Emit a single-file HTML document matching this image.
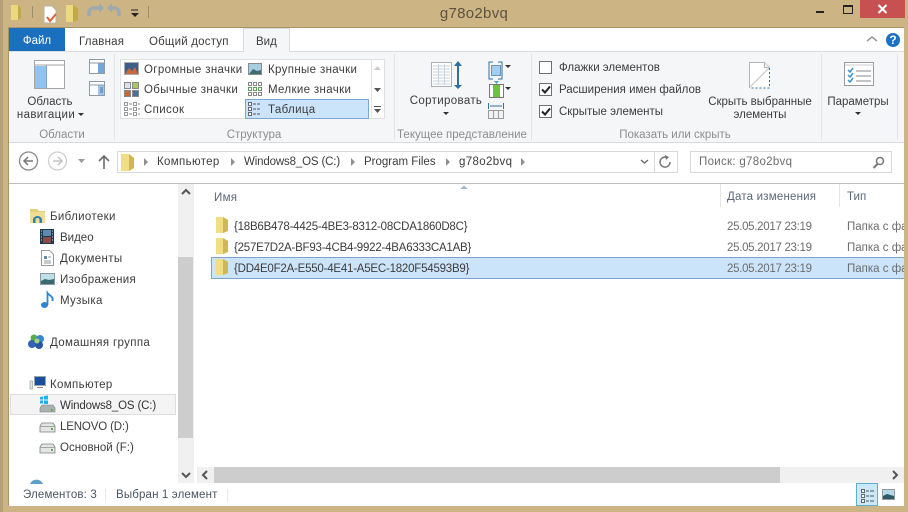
<!DOCTYPE html>
<html lang="ru"><head><meta charset="utf-8"><title>g78o2bvq</title>
<style>
html,body{margin:0;padding:0}
body{width:908px;height:512px;overflow:hidden;position:relative;background:#cdb484;font-family:"Liberation Sans",sans-serif;font-size:11.5px;color:#3c3c3c}
.a,.t{position:absolute}
.t{white-space:nowrap;line-height:14px}
svg{position:absolute;overflow:visible}
.g{color:#8d8d8d}
.c{text-align:center}
.s{letter-spacing:.35px}
.z{letter-spacing:0}
.n{letter-spacing:-.15px}
.u{letter-spacing:-.22px}
.d{letter-spacing:-.3px;color:#6d6d6d}
</style></head><body>
<!-- window -->
<div class="a" style="left:8px;top:27px;width:896px;height:479px;background:#fff;border-left:1px solid #a69468;border-top:1px solid #a69468;box-sizing:border-box"></div>
<div class="a" style="left:0;top:0;width:3px;height:512px;background:#b5a079"></div>

<!-- title bar -->
<svg style="left:0;top:0" width="170" height="27">
<path d="M11 5h7l3 3v10l-3 2h-7z" fill="#ead97f"/><path d="M18 5v15l3-2V8z" fill="#c2a848"/>
<path d="M32.500 6v12" stroke="#9c8f70"/>
<path d="M44 6h8l4 4v13H44z" fill="#fff" stroke="#b8b2a6"/><path d="M47 17l3 4 6-7" fill="none" stroke="#d9643c" stroke-width="2"/>
<path d="M66 5h7l5 3v12l-5 2h-7z" fill="#ead97f"/><path d="M73 5v17l5-2V8z" fill="#c2a848"/>
<path d="M89 16v-4a5 5 0 0 1 5-4h6" fill="none" stroke="#9ba9b0" stroke-width="3.500"/><path d="M99 3l5 5-5 5z" fill="#9ba9b0"/>
<path d="M119 16v-4a5 5 0 0 0-5-4h-3" fill="none" stroke="#9ba9b0" stroke-width="3.500"/><path d="M112 3l-5 5 5 5z" fill="#9ba9b0"/>
<path d="M131 10h7" stroke="#222"/><path d="M131 13h8l-4 4z" fill="#222"/>
<path d="M148.500 6v12" stroke="#9c8f70"/>
</svg>
<div class="t c" style="left:367px;top:4px;width:214px;font-size:15px;line-height:20px;color:#5c5240;letter-spacing:.3px">g78o2bvq</div>
<div class="a" style="left:816px;top:11px;width:8px;height:2px;background:#222"></div>
<div class="a" style="left:843px;top:5px;width:8px;height:6px;border:1px solid #222;border-top-width:2px"></div>
<div class="a" style="left:860px;top:0;width:45px;height:18px;background:#c75050"></div>
<svg style="left:877px;top:4px" width="11" height="10"><path d="M1.500 1l8 8M9.500 1l-8 8" stroke="#fff" stroke-width="2"/></svg>

<!-- tabs -->
<div class="a" style="left:9px;top:28px;width:56px;height:23px;background:#1a70be"></div>
<div class="t c" style="left:9px;top:34px;width:56px;color:#fff">Файл</div>
<div class="t" style="left:79px;top:35px;letter-spacing:.2px">Главная</div>
<div class="t" style="left:149px;top:35px;letter-spacing:.2px">Общий доступ</div>
<div class="a" style="left:243px;top:28px;width:47px;height:24px;background:#f5f6f7;border:1px solid #dadbdc;border-bottom:0;box-sizing:border-box;z-index:2"></div>
<div class="t" style="left:256px;top:35px;z-index:3">Вид</div>
<svg style="left:866px;top:32px" width="34" height="16"><path d="M1 9l5-4 5 4" fill="none" stroke="#999" stroke-width="1.500"/>
<circle cx="27" cy="8" r="7" fill="#1a70c4"/></svg>
<div class="t c" style="left:886px;top:33px;width:14px;color:#fff;font-weight:bold;font-size:12px">?</div>

<!-- ribbon -->
<div class="a" style="left:9px;top:51px;width:895px;height:92px;background:#f5f6f7;border-top:1px solid #dadbdc;border-bottom:1px solid #dadbdc;box-sizing:border-box"></div>
<div class="a" style="left:114px;top:54px;width:1px;height:86px;background:#e2e3e4"></div>
<div class="a" style="left:394px;top:54px;width:1px;height:86px;background:#e2e3e4"></div>
<div class="a" style="left:531px;top:54px;width:1px;height:86px;background:#e2e3e4"></div>
<div class="a" style="left:821px;top:54px;width:1px;height:86px;background:#e2e3e4"></div>
<div class="a" style="left:897px;top:54px;width:1px;height:86px;background:#e2e3e4"></div>

<!-- Области -->
<svg style="left:33px;top:60px" width="75" height="46">
<rect x="1.500" y=".5" width="30" height="28" fill="#fff" stroke="#a5a5a5"/><path d="M2 5h29" stroke="#a5a5a5"/>
<rect x="2" y="6" width="11" height="22" fill="#8fc3f4"/><path d="M13.500 5v23" stroke="#7fa6c8"/>
<rect x="56.500" y="-.5" width="15" height="14" fill="#fff" stroke="#8e9aa6"/><rect x="65" y="3" width="6" height="10" fill="#6fa8dc"/><path d="M57 3h14" stroke="#8e9aa6"/>
<rect x="56.500" y="21.500" width="15" height="14" fill="#fff" stroke="#8e9aa6"/><rect x="65" y="25" width="6" height="10" fill="#9fc6ea"/><path d="M57 25h14" stroke="#8e9aa6"/><path d="M67 28h3M67 30h3M67 32h3" stroke="#3a78b0"/>
</svg>
<div class="t c z" style="left:14px;top:95px;width:72px">Область</div>
<div class="t c s" style="left:10px;top:108px;width:72px">навигации</div>
<svg style="left:78px;top:113px" width="6" height="4"><path d="M0 0h6l-3 3z" fill="#333"/></svg>
<div class="t c g z" style="left:26px;top:128px;width:72px">Области</div>

<!-- Структура gallery -->
<div class="a" style="left:120px;top:59px;width:265px;height:60px;background:#fff;border:1px solid #dfe0e1;box-sizing:border-box"></div>
<div class="a" style="left:245px;top:99px;width:124px;height:20px;background:#cce4fa;border:1px solid #7ba7d2;box-sizing:border-box"></div>
<svg style="left:120px;top:59px" width="265" height="60">
<rect x="4.500" y="3.500" width="14" height="12" fill="#3c5f8a" stroke="#aaa"/><path d="M5 15l4-6 3 3 3-4 3 7z" fill="#c9683a"/>
<rect x="4.500" y="23.500" width="6" height="6" fill="#d7e4ef" stroke="#888"/><rect x="12.500" y="23.500" width="6" height="6" fill="#a8c46b" stroke="#888"/><rect x="4.500" y="31.500" width="6" height="6" fill="#c9683a" stroke="#888"/><rect x="12.500" y="31.500" width="6" height="6" fill="#4a6f9a" stroke="#888"/>
<g fill="#fff" stroke="#999"><rect x="4.500" y="43.500" width="3" height="3"/><rect x="4.500" y="48.500" width="3" height="3"/><rect x="4.500" y="53.500" width="3" height="3"/><rect x="13.500" y="43.500" width="3" height="3"/><rect x="13.500" y="48.500" width="3" height="3"/><rect x="13.500" y="53.500" width="3" height="3"/></g>
<path d="M9 45h3M9 50h3M9 55h3M18 45h2M18 50h2M18 55h2" stroke="#888"/>
<rect x="128.500" y="4.500" width="13" height="11" fill="#a9cde0" stroke="#8a8a8a"/><path d="M129 15l4-5 4 2 4-1v4z" fill="#3f6b73"/>
<g fill="#fff" stroke="#888"><rect x="128.500" y="23.500" width="3" height="3"/><rect x="133.500" y="23.500" width="3" height="3"/><rect x="138.500" y="23.500" width="3" height="3"/><rect x="128.500" y="28.500" width="3" height="3" stroke="#5a9c5a"/><rect x="133.500" y="28.500" width="3" height="3" stroke="#5a9c5a"/><rect x="138.500" y="28.500" width="3" height="3" stroke="#5a9c5a"/><rect x="128.500" y="33.500" width="3" height="3"/><rect x="133.500" y="33.500" width="3" height="3"/><rect x="138.500" y="33.500" width="3" height="3"/></g>
<g fill="#fff" stroke="#667"><rect x="128.500" y="43.500" width="3" height="3"/><rect x="128.500" y="48.500" width="3" height="3"/><rect x="128.500" y="53.500" width="3" height="3"/></g>
<path d="M133 45h3M137 45h3M133 50h3M137 50h3M133 55h3M137 55h3" stroke="#556"/>
</svg>
<div class="t s" style="left:144px;top:63px">Огромные значки</div>
<div class="t s" style="left:268px;top:63px">Крупные значки</div>
<div class="t s" style="left:144px;top:83px">Обычные значки</div>
<div class="t s" style="left:268px;top:83px">Мелкие значки</div>
<div class="t s" style="left:144px;top:103px">Список</div>
<div class="t s" style="left:268px;top:103px">Таблица</div>
<svg style="left:370px;top:60px" width="15" height="58"><path d="M1.500 0v58" stroke="#e4e5e6"/><path d="M4 10l3.500-4 3.500 4z" fill="#ccc"/><path d="M4 28h7l-3.500 4z" fill="#555"/><path d="M4 46.500h7" stroke="#555"/><path d="M4 49h7l-3.500 4z" fill="#555"/></svg>
<div class="t c g z" style="left:204px;top:128px;width:100px">Структура</div>

<!-- Текущее представление -->
<svg style="left:428px;top:60px" width="90" height="62">
<rect x="3.500" y="2.500" width="20" height="24" fill="#fff" stroke="#aab0b6"/><path d="M5 6h17M5 9h17M5 12h17M5 15h17M5 18h17M5 21h17M5 24h17" stroke="#c5d4e2"/><path d="M10.500 4v21M16.500 4v21" stroke="#c5d4e2"/>
<path d="M30 3v24" stroke="#2d6f9f" stroke-width="2"/><path d="M26 6l4-5 4 5zM26 25h8l-4 4z" fill="#2d6f9f"/>
<path d="M65 2h-4v17h4M70 2h4v17h-4" fill="none" stroke="#2d6f9f"/><rect x="63.500" y="5.500" width="9" height="10" fill="#a5cdf0" stroke="#6d93b5"/><path d="M77 5h6l-3 3z" fill="#333"/>
<rect x="61.500" y="24.500" width="14" height="13" fill="#fff" stroke="#777"/><rect x="65" y="25" width="7" height="12" fill="#6cc33c"/><path d="M66 21h5l-2.500 3z" fill="#5a9ccc"/><path d="M77 27h6l-3 3z" fill="#333"/>
<path d="M60.500 43v6M75.500 43v6M62 46h12" stroke="#2d6f9f"/><rect x="60.500" y="50.500" width="15" height="8" fill="#f1f1f1" stroke="#999"/><path d="M65.500 51v7M70.500 51v7" stroke="#999"/>
</svg>
<div class="t c s" style="left:400px;top:94px;width:92px">Сортировать</div>
<svg style="left:443px;top:112px" width="6" height="4"><path d="M0 0h6l-3 3z" fill="#333"/></svg>
<div class="t c g z" style="left:395px;top:128px;width:134px">Текущее представление</div>

<!-- Показать или скрыть -->
<div class="a" style="left:539px;top:61px;width:13px;height:13px;box-sizing:border-box;background:#fff;border:1px solid #707070"></div>
<div class="a" style="left:539px;top:83px;width:13px;height:13px;box-sizing:border-box;background:#fff;border:1px solid #707070"></div>
<div class="a" style="left:539px;top:105px;width:13px;height:13px;box-sizing:border-box;background:#fff;border:1px solid #707070"></div>
<svg style="left:539px;top:83px" width="15" height="37"><path d="M3 6.500l3 3 5-6" fill="none" stroke="#222" stroke-width="2"/><path d="M3 28.500l3 3 5-6" fill="none" stroke="#222" stroke-width="2"/></svg>
<div class="t z" style="left:559px;top:61px">Флажки элементов</div>
<div class="t z" style="left:559px;top:83px">Расширения имен файлов</div>
<div class="t z" style="left:559px;top:105px">Скрытые элементы</div>
<svg style="left:748px;top:62px" width="24" height="28"><path d="M1.500.5h15l5 5V26H1.500z" fill="#fff"/><path d="M1.500 26V.5h15l5 5" fill="none" stroke="#b5b5b5"/><path d="M16.500.5v5h5" fill="#eee" stroke="#b5b5b5"/><path d="M2 25L21 6" stroke="#c2c2c2"/><path d="M21.500 6v20H1.500" fill="none" stroke="#2d6f9f" stroke-dasharray="2 2"/></svg>
<div class="t c z" style="left:700px;top:95px;width:120px">Скрыть выбранные</div>
<div class="t c z" style="left:700px;top:108px;width:120px">элементы</div>
<div class="t c g z" style="left:600px;top:128px;width:150px">Показать или скрыть</div>
<svg style="left:844px;top:62px" width="31" height="25"><rect x=".5" y=".5" width="29" height="23" fill="#fff" stroke="#9a9a9a" /><path d="M1 3h29" stroke="#ccc"/><path d="M12 9h15M12 14h15M12 19h15" stroke="#888"/><path d="M4 8l2 2 3-4M4 13l2 2 3-4M4 18l2 2 3-4" fill="none" stroke="#3a93c9" stroke-width="1.500"/></svg>
<div class="t c z" style="left:820px;top:95px;width:76px">Параметры</div>
<svg style="left:855px;top:112px" width="6" height="4"><path d="M0 0h6l-3 3z" fill="#333"/></svg>

<!-- address bar -->
<svg style="left:18px;top:150px" width="100" height="24">
<circle cx="10.500" cy="11" r="9" fill="#fff" stroke="#8a8a8a" stroke-width="1.300"/><path d="M15 11H6M10 7l-4 4 4 4" fill="none" stroke="#777" stroke-width="1.500"/>
<circle cx="39.500" cy="11" r="9" fill="#fff" stroke="#d0d0d0" stroke-width="1.300"/><path d="M35 11h9M40 7l4 4-4 4" fill="none" stroke="#c4c4c4" stroke-width="1.500"/>
<path d="M60 9h7l-3.500 4z" fill="#999"/>
<path d="M86 19V6M81 11l5-5 5 5" fill="none" stroke="#6a6a6a" stroke-width="1.600"/>
</svg>
<div class="a" style="left:117px;top:151px;width:561px;height:22px;background:#fff;border:1px solid #d9d9d9;box-sizing:border-box"></div>
<svg style="left:120px;top:152px" width="16" height="20"><path d="M1 2h8l5 4v10l-5 3H1z" fill="#f0de86"/><path d="M9 2v17l5-3V6z" fill="#d0b654"/></svg>
<div class="t s" style="left:157px;top:155px">Компьютер</div>
<div class="t n" style="left:244px;top:155px">Windows8_OS (C:)</div>
<div class="t z" style="left:364px;top:155px">Program Files</div>
<div class="t s" style="left:459px;top:155px">g78o2bvq</div>
<svg style="left:140px;top:158px" width="390" height="9"><path d="M4 0l4 4-4 4zM91 0l4 4-4 4zM211 0l4 4-4 4zM306 0l4 4-4 4zM381 0l4 4-4 4z" fill="#8f8f8f"/></svg>
<svg style="left:638px;top:152px" width="40" height="20"><path d="M3 8l3.500 3L10 8" fill="none" stroke="#666" stroke-width="1.300"/><path d="M16.500 0v20" stroke="#d9d9d9"/>
<path d="M32 10a5 5 0 1 1-3-4.500" fill="none" stroke="#777" stroke-width="1.500"/><path d="M27 3l4 2-3 3z" fill="#777"/></svg>
<div class="a" style="left:690px;top:151px;width:202px;height:22px;background:#fff;border:1px solid #d9d9d9;box-sizing:border-box"></div>
<div class="t" style="left:699px;top:155px;color:#6d6d6d;letter-spacing:.3px">Поиск: g78o2bvq</div>
<svg style="left:872px;top:156px" width="14" height="14"><circle cx="8" cy="5" r="3.500" fill="none" stroke="#777" stroke-width="1.500"/><path d="M5.500 8L1.500 12" stroke="#777" stroke-width="2"/></svg>
<div class="a" style="left:9px;top:183px;width:895px;height:1px;background:#bfbfbf"></div>

<!-- nav pane -->
<svg style="left:29px;top:208px" width="26" height="16"><path d="M1 1h7l2 2h6v3H1z" fill="#e6cf7c"/><path d="M1 4h15v11H1z" fill="#eedc97"/><path d="M4 15v-3a4.500 4 0 0 1 9 0v3h-2.500v-3a2 2 0 0 0-4 0v3z" fill="#2f7fb5"/></svg>
<div class="t s" style="left:50px;top:210px">Библиотеки</div>
<svg style="left:40px;top:229px" width="15" height="16"><rect width="14" height="15" fill="#1d3a4d"/><rect x="3" y="1" width="8" height="6" fill="#5b8bb3"/><rect x="3" y="8" width="8" height="6" fill="#8a4a48"/><path d="M1 2h1M1 5h1M1 8h1M1 11h1M12 2h1M12 5h1M12 8h1M12 11h1" stroke="#cfd8dd"/></svg>
<div class="t z" style="left:60px;top:231px">Видео</div>
<svg style="left:41px;top:250px" width="14" height="16"><path d="M.5.500h8l4 4v11H.5z" fill="#fff" stroke="#9a9a9a"/><path d="M3 6h3v3H3z" fill="#5d8bb0"/><path d="M7 7h3M3 11h7M3 13h7" stroke="#8a99a6"/></svg>
<div class="t s" style="left:60px;top:252px">Документы</div>
<svg style="left:40px;top:273px" width="15" height="12"><rect x=".5" y=".5" width="14" height="11" fill="#bfe0ea" stroke="#8a9aa0"/><path d="M1 11V8l4-2 4 1 5-1v5z" fill="#356a6e"/></svg>
<div class="t s" style="left:60px;top:273px">Изображения</div>
<svg style="left:40px;top:291px" width="15" height="18"><ellipse cx="4.500" cy="14" rx="3.500" ry="3" fill="#2d85cf"/><path d="M7.500 14V2c2 3 6 3 5 8" fill="none" stroke="#2d85cf" stroke-width="1.800"/></svg>
<div class="t s" style="left:60px;top:294px">Музыка</div>
<svg style="left:28px;top:333px" width="18" height="17"><circle cx="6" cy="5" r="3.500" fill="#5cab4e"/><circle cx="4" cy="11" r="4" fill="#2e63b5"/><circle cx="12" cy="6" r="4" fill="#3a86d4"/><circle cx="11" cy="12" r="4" fill="#25569f"/><circle cx="9" cy="8" r="2.500" fill="#a6d67c"/></svg>
<div class="t s" style="left:50px;top:336px">Домашняя группа</div>
<svg style="left:29px;top:376px" width="18" height="15"><rect x="5.500" y=".5" width="11" height="9" fill="#1b4f9c" stroke="#9aa4ae"/><path d="M8 11h6v1H8z" fill="#888"/><rect x="1" y="5" width="2.500" height="8" fill="#dfe5e8" stroke="#8b9499" stroke-width=".6"/></svg>
<div class="t s" style="left:50px;top:378px">Компьютер</div>
<div class="a" style="left:10px;top:394px;width:166px;height:21px;background:#f4f4f4;border:1px solid #dedede;box-sizing:border-box"></div>
<svg style="left:39px;top:395px" width="17" height="18"><path d="M1 2l3-.5v3H1zM5 1l4-.5v4H5zM1 5.500h3v3H1zM5 5.500h4v3.500H5z" fill="#1ab2e8"/><path d="M1 13l2-3h11l2 3v4H1z" fill="#aab1b3" stroke="#7a8082" stroke-width=".6"/><rect x="12" y="14" width="2" height="2" fill="#5fb04a"/></svg>
<div class="t n" style="left:60px;top:399px;color:#333">Windows8_OS (C:)</div>
<svg style="left:39px;top:422px" width="17" height="11"><path d="M1 4l2-3h11l2 3v6H1z" fill="#e4e4e4" stroke="#7a8082" stroke-width=".8"/><path d="M1 4.500h15" stroke="#a5a5a5"/><rect x="12" y="6" width="2" height="2" fill="#5fb04a"/></svg>
<div class="t n" style="left:60px;top:420px">LENOVO (D:)</div>
<svg style="left:39px;top:443px" width="17" height="11"><path d="M1 4l2-3h11l2 3v6H1z" fill="#e4e4e4" stroke="#7a8082" stroke-width=".8"/><path d="M1 4.500h15" stroke="#a5a5a5"/><rect x="12" y="6" width="2" height="2" fill="#5fb04a"/></svg>
<div class="t z" style="left:60px;top:441px">Основной (F:)</div>
<svg style="left:29px;top:480px" width="16" height="4"><path d="M1 4a7 7 0 0 1 13 0z" fill="#5aa0c8"/></svg>

<!-- nav scrollbar -->
<div class="a" style="left:178px;top:184px;width:16px;height:299px;background:#f0f0f0"></div>
<div class="a" style="left:178px;top:257px;width:15px;height:181px;background:#cdcdcd"></div>
<svg style="left:178px;top:184px" width="16" height="299"><path d="M4 10l4-4 4 4" fill="none" stroke="#555" stroke-width="2"/><path d="M4 289l4 4 4-4" fill="none" stroke="#555" stroke-width="2"/></svg>

<!-- list header -->
<div class="t" style="left:214px;top:191px;color:#5a6779;letter-spacing:.3px">Имя</div>
<svg style="left:460px;top:185px" width="9" height="5"><path d="M0 4l4-3.500L8 4z" fill="#a5bdd2"/></svg>
<div class="a" style="left:720px;top:184px;width:1px;height:23px;background:#e5e5e5"></div>
<div class="a" style="left:839px;top:184px;width:1px;height:23px;background:#e5e5e5"></div>
<div class="t" style="left:727px;top:190px;color:#5a6779;letter-spacing:.2px">Дата изменения</div>
<div class="t" style="left:847px;top:190px;color:#5a6779">Тип</div>

<!-- rows -->
<div class="a" style="left:211px;top:257px;width:693px;height:22px;background:#cce4fa;border:1px solid #7da2ce;border-right:0;box-sizing:border-box"></div>
<svg style="left:215px;top:216px" width="15" height="60">
<path d="M1 1h7l5 3v11l-5 2H1z" fill="#f0de86"/><path d="M8 1v16l5-2V4z" fill="#d0b654"/>
<path d="M1 22h7l5 3v11l-5 2H1z" fill="#f0de86"/><path d="M8 22v16l5-2V25z" fill="#d0b654"/>
<path d="M1 43h7l5 3v11l-5 2H1z" fill="#f0de86"/><path d="M8 43v16l5-2V46z" fill="#d0b654"/>
</svg>
<div class="t u" style="left:234px;top:220px">{18B6B478-4425-4BE3-8312-08CDA1860D8C}</div>
<div class="t u" style="left:234px;top:241px">{257E7D2A-BF93-4CB4-9922-4BA6333CA1AB}</div>
<div class="t u" style="left:234px;top:262px">{DD4E0F2A-E550-4E41-A5EC-1820F54593B9}</div>
<div class="t d" style="left:727px;top:220px">25.05.2017 23:19</div>
<div class="t d" style="left:727px;top:241px">25.05.2017 23:19</div>
<div class="t d" style="left:727px;top:262px">25.05.2017 23:19</div>
<div class="a" style="left:847px;top:220px;width:57px;height:14px;overflow:hidden"><span class="t" style="left:0;top:0;color:#6d6d6d">Папка с файлами</span></div>
<div class="a" style="left:847px;top:241px;width:57px;height:14px;overflow:hidden"><span class="t" style="left:0;top:0;color:#6d6d6d">Папка с файлами</span></div>
<div class="a" style="left:847px;top:262px;width:57px;height:14px;overflow:hidden"><span class="t" style="left:0;top:0;color:#6d6d6d">Папка с файлами</span></div>

<!-- h scrollbar -->
<div class="a" style="left:197px;top:467px;width:707px;height:16px;background:#f0f0f0"></div>
<div class="a" style="left:214px;top:467px;width:566px;height:16px;background:#cdcdcd"></div>
<svg style="left:197px;top:467px" width="707" height="16"><path d="M10 4l-4 4 4 4" fill="none" stroke="#555" stroke-width="2"/><path d="M696 4l4 4-4 4" fill="none" stroke="#555" stroke-width="2"/></svg>

<!-- status bar -->
<div class="t" style="left:23px;top:488px;color:#4a5563;letter-spacing:.15px">Элементов: 3</div>
<div class="a" style="left:105px;top:489px;width:1px;height:13px;background:#e8e8e8"></div>
<div class="t" style="left:116px;top:488px;color:#4a5563;letter-spacing:.15px">Выбран 1 элемент</div>
<div class="a" style="left:227px;top:489px;width:1px;height:13px;background:#e8e8e8"></div>
<div class="a" style="left:856px;top:483px;width:22px;height:23px;background:#cce8f8;border:1px solid #5ab0d0;box-sizing:border-box"></div>
<svg style="left:860px;top:488px" width="42" height="15"><g fill="#fff" stroke="#666"><rect x="1.500" y="1.500" width="3" height="3"/><rect x="1.500" y="6.500" width="3" height="3"/><rect x="1.500" y="11.500" width="3" height="3"/></g><path d="M6 3h3M10 3h4M6 8h3M10 8h4M6 13h3M10 13h4" stroke="#555"/>
<rect x="22.500" y="1.500" width="12" height="10" fill="#b5d8e8" stroke="#999"/><path d="M23 11V8l4-2 7 2v3z" fill="#2c5a68"/></svg>
</body></html>
